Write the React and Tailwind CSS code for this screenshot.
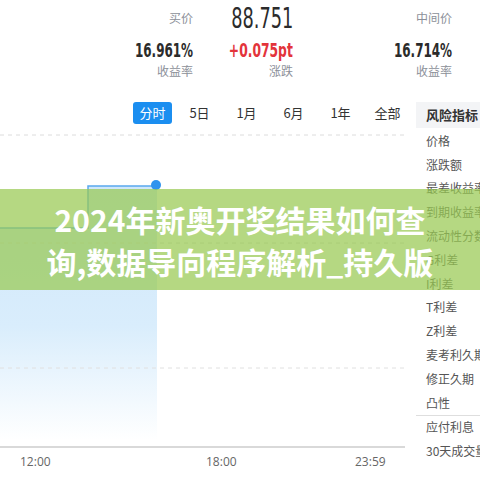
import React from 'react';

const cjk = { fontFamily: '"Noto Sans CJK SC", "Noto Sans", sans-serif' };
const num = { fontFamily: '"DejaVu Sans Condensed", "Liberation Sans", sans-serif' };

const tabs = ['分时', '5日', '1月', '6月', '1年', '全部'];
const risks = ['价格', '涨跌额', '最差收益率', '到期收益率', '流动性分数', 'G利差', 'I利差', 'T利差', 'Z利差', '麦考利久期', '修正久期', '凸性'];

function Chart() {
    return (
        <svg width="405" height="314" viewBox="0 0 405 314" className="block">
            <defs>
                <linearGradient id="fill" x1="0" y1="52" x2="0" y2="306" gradientUnits="userSpaceOnUse">
                    <stop offset="0" stopColor="#cfe7fb" />
                    <stop offset="0.55" stopColor="#d9edfc" />
                    <stop offset="1" stopColor="#ffffff" />
                </linearGradient>
            </defs>
            <line x1="0" y1="1" x2="405" y2="1" stroke="#dcdcdc" strokeDasharray="4 4" />
            <path d="M0 94 H88 V52 H157 V306 H0 Z" fill="url(#fill)" />
            <line x1="0" y1="109" x2="405" y2="109" stroke="#d6d6d6" strokeDasharray="4 4" />
            <line x1="0" y1="234" x2="405" y2="234" stroke="#e0e0e0" strokeDasharray="4 4" />
            <path d="M0 94 H88 V52 H157" fill="none" stroke="#5aa9ee" strokeWidth="1.5" />
            <circle cx="156" cy="51" r="5" fill="#2f93ee" />
            <line x1="0" y1="313" x2="405" y2="313" stroke="#cccccc" strokeWidth="1.5" />
        </svg>
    );
}

export default function App() {
    return (
        <div className="relative w-[480px] h-[480px] overflow-hidden bg-white" style={cjk}>
            <div className="grid grid-cols-[193px_100px_159px]">
                <div className="h-[36px] flex items-center justify-end text-[12px] text-[#8c9099]">买价</div>
                <div className="h-[36px] flex items-center justify-end">
                    <span className="inline-block text-[29px] leading-none text-[#2b2b2b] scale-x-[0.68] origin-right" style={num}>88.751</span>
                </div>
                <div className="h-[36px] flex items-center justify-end text-[12px] text-[#8c9099]">中间价</div>

                <div className="h-[28px] flex items-center justify-end">
                    <span className="inline-block text-[19px] leading-none font-semibold text-[#2b2b2b] scale-x-[0.7] origin-right" style={num}>16.961%</span>
                </div>
                <div className="h-[28px] flex items-center justify-end">
                    <span className="inline-block text-[19px] leading-none font-semibold text-[#e3343b] scale-x-[0.72] origin-right" style={num}>+0.075pt</span>
                </div>
                <div className="h-[28px] flex items-center justify-end">
                    <span className="inline-block text-[19px] leading-none font-semibold text-[#2b2b2b] scale-x-[0.7] origin-right" style={num}>16.714%</span>
                </div>

                <div className="h-[14px] flex items-center justify-end text-[12px] text-[#8c9099]">收益率</div>
                <div className="h-[14px] flex items-center justify-end text-[12px] text-[#8c9099]">涨跌</div>
                <div className="h-[14px] flex items-center justify-end text-[12px] text-[#8c9099]">收益率</div>
            </div>

            <div className="flex mt-[24px]">
                <div className="w-[416px] shrink-0">
                    <div className="flex h-[22px] pl-[129px]">
                        {tabs.map((t, i) => (
                            <div key={t} className="w-[47px] flex justify-center">
                                {i === 0 ? (
                                    <span className="h-[22px] px-[6px] rounded-[3px] bg-[#1b8ef0] text-white text-[13px] leading-[22px]">{t}</span>
                                ) : (
                                    <span className="text-[13px] leading-[22px] text-[#333]">{t}</span>
                                )}
                            </div>
                        ))}
                    </div>
                    <div className="mt-[10px]">
                        <Chart />
                    </div>
                    <div className="relative h-[30px] text-[12px] text-[#666]" style={{ fontFamily: '"Open Sans", "Noto Sans", sans-serif' }}>
                        <span className="absolute left-[20px] top-[5px]">12:00</span>
                        <span className="absolute left-[206px] top-[5px]">18:00</span>
                        <span className="absolute left-[355px] top-[5px]">23:59</span>
                    </div>
                </div>
                <div className="flex-1 min-w-0">
                    <div className="h-[26px] bg-[#f3f4f6] pl-[10px] flex items-center text-[13px] font-bold text-[#333] whitespace-nowrap">风险指标</div>
                    <div className="pt-[1px]">
                        {risks.map((r) => (
                            <div key={r} className="h-[23.8px] pl-[10px] flex items-center text-[12px] text-[#555] whitespace-nowrap overflow-hidden">{r}</div>
                        ))}
                        <div className="h-px bg-[#dedede]" />
                        {['应付利息', '30天成交量'].map((r) => (
                            <div key={r} className="h-[23.8px] pl-[10px] flex items-center text-[12px] text-[#555] whitespace-nowrap overflow-hidden">{r}</div>
                        ))}
                    </div>
                </div>
            </div>

            <div className="absolute left-0 top-[189px] w-full h-[101px] bg-[rgba(152,201,82,0.72)] flex flex-col items-center justify-center">
                <div className="text-white font-bold text-[30px] leading-[42px] whitespace-nowrap">2024年新奥开奖结果如何查</div>
                <div className="text-white font-bold text-[30px] leading-[42px] whitespace-nowrap">询,数据导向程序解析_持久版</div>
            </div>
        </div>
    );
}
